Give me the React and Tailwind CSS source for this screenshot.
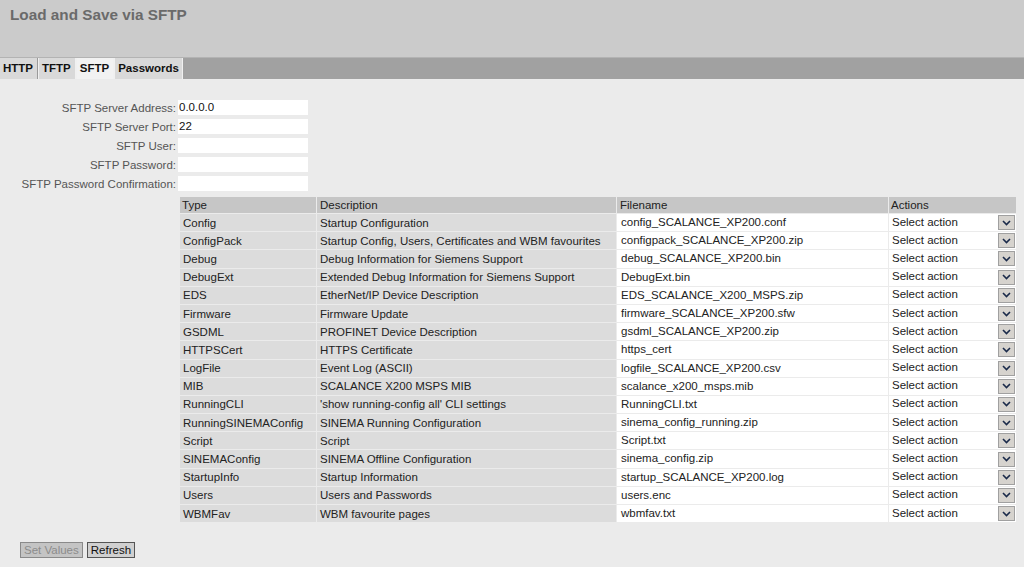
import React from "react";

const rows = [
  ["Config", "Startup Configuration", "config_SCALANCE_XP200.conf"],
  ["ConfigPack", "Startup Config, Users, Certificates and WBM favourites", "configpack_SCALANCE_XP200.zip"],
  ["Debug", "Debug Information for Siemens Support", "debug_SCALANCE_XP200.bin"],
  ["DebugExt", "Extended Debug Information for Siemens Support", "DebugExt.bin"],
  ["EDS", "EtherNet/IP Device Description", "EDS_SCALANCE_X200_MSPS.zip"],
  ["Firmware", "Firmware Update", "firmware_SCALANCE_XP200.sfw"],
  ["GSDML", "PROFINET Device Description", "gsdml_SCALANCE_XP200.zip"],
  ["HTTPSCert", "HTTPS Certificate", "https_cert"],
  ["LogFile", "Event Log (ASCII)", "logfile_SCALANCE_XP200.csv"],
  ["MIB", "SCALANCE X200 MSPS MIB", "scalance_x200_msps.mib"],
  ["RunningCLI", "'show running-config all' CLI settings", "RunningCLI.txt"],
  ["RunningSINEMAConfig", "SINEMA Running Configuration", "sinema_config_running.zip"],
  ["Script", "Script", "Script.txt"],
  ["SINEMAConfig", "SINEMA Offline Configuration", "sinema_config.zip"],
  ["StartupInfo", "Startup Information", "startup_SCALANCE_XP200.log"],
  ["Users", "Users and Passwords", "users.enc"],
  ["WBMFav", "WBM favourite pages", "wbmfav.txt"],
];

const fields = [
  ["SFTP Server Address:", "0.0.0.0"],
  ["SFTP Server Port:", "22"],
  ["SFTP User:", ""],
  ["SFTP Password:", ""],
  ["SFTP Password Confirmation:", ""],
];

function Chevron() {
  return (
    <svg width="9" height="6" viewBox="0 0 9 6">
      <path d="M1 1 L4.5 4.5 L8 1" fill="none" stroke="#1a2a4a" strokeWidth="1.6" />
    </svg>
  );
}

export default function App() {
  return (
    <div
      className="w-[1024px] h-[567px] overflow-hidden bg-[#ebebeb] text-[11.5px] leading-[14px]"
      style={{ fontFamily: '"Liberation Sans", Arial, sans-serif' }}
    >
      <div className="h-[57px] bg-[#cbcbcb] pl-[10px] pt-[6px]">
        <div className="text-[15.3px] leading-[18px] font-bold text-[#6a6a6a]">Load and Save via SFTP</div>
      </div>
      <div className="h-[22px] bg-[#a1a1a1] border-t border-[#b3b3b3] flex items-stretch">
        <div className="pl-[3px] pr-[4px] pb-[1px] bg-[#d9d9d9] font-bold text-[#111] flex items-center border-r border-[#9a9a9a]">HTTP</div>
        <div className="pl-[3px] pr-[4px] pb-[1px] bg-[#d9d9d9] font-bold text-[#111] flex items-center border-l border-[#f0f0f0] border-r border-[#9a9a9a]">TFTP</div>
        <div className="pl-[3px] pr-[4px] pb-[1px] bg-[#f2f2f2] font-bold text-[#111] flex items-center border-l border-[#f0f0f0] border-r border-[#9a9a9a]">SFTP</div>
        <div className="px-[3px] pb-[1px] bg-[#d9d9d9] font-bold text-[#111] flex items-center border-l border-[#f0f0f0] border-r border-[#9a9a9a]">Passwords</div>
      </div>
      <div className="pt-[21px] flex flex-col gap-[4px]">
        {fields.map(([label, value]) => (
          <div key={label} className="flex items-center h-[15px]">
            <div className="w-[178px] text-right text-[#555] pr-[2px]">{label}</div>
            <div className="w-[130px] h-[15px] bg-white text-[#111] px-[1px] leading-[15px]">{value}</div>
          </div>
        ))}
      </div>
      <div className="pl-[179px] pt-[5px]">
        <table className="border-separate border-spacing-[1px] text-[#222]">
          <thead>
            <tr className="h-[16px]">
              <th className="w-[136px] bg-[#c6c6c6] font-normal text-left pl-[2px] py-0">Type</th>
              <th className="w-[299px] bg-[#c6c6c6] font-normal text-left pl-[3px] py-0">Description</th>
              <th className="w-[271px] bg-[#c6c6c6] font-normal text-left pl-[3px] py-0">Filename</th>
              <th className="w-[127px] bg-[#c6c6c6] font-normal text-left pl-[2px] py-0">Actions</th>
            </tr>
          </thead>
          <tbody>
            {rows.map(([t, d, f]) => (
              <tr key={t} className="h-[17.2px]">
                <td className="bg-[#dcdcdc] pl-[3px] p-0">{t}</td>
                <td className="bg-[#dcdcdc] pl-[3px] p-0">{d}</td>
                <td className="bg-[#dcdcdc] p-0">
                  <div className="h-[17.2px] bg-white pl-[4px] leading-[17px]">{f}</div>
                </td>
                <td className="bg-[#dcdcdc] p-0">
                  <div className="h-[17.2px] bg-white flex items-center justify-between pl-[3px] pr-[1px]">
                    <span className="leading-[14px] -mt-[2px]">Select action</span>
                    <span className="w-[17px] h-[15px] bg-[#d6d3ce] border border-[#a0a0a0] flex items-center justify-center">
                      <Chevron />
                    </span>
                  </div>
                </td>
              </tr>
            ))}
          </tbody>
        </table>
      </div>
      <div className="pl-[20px] pt-[19px] flex gap-[4px]">
        <button className="h-[16px] px-[3px] bg-[#c4c4c4] border border-[#8a8a8a] text-[#8c8c8c] leading-[14px]">Set Values</button>
        <button className="h-[16px] px-[3px] bg-[#d0d0d0] border border-[#555] text-[#111] leading-[14px]">Refresh</button>
      </div>
    </div>
  );
}
